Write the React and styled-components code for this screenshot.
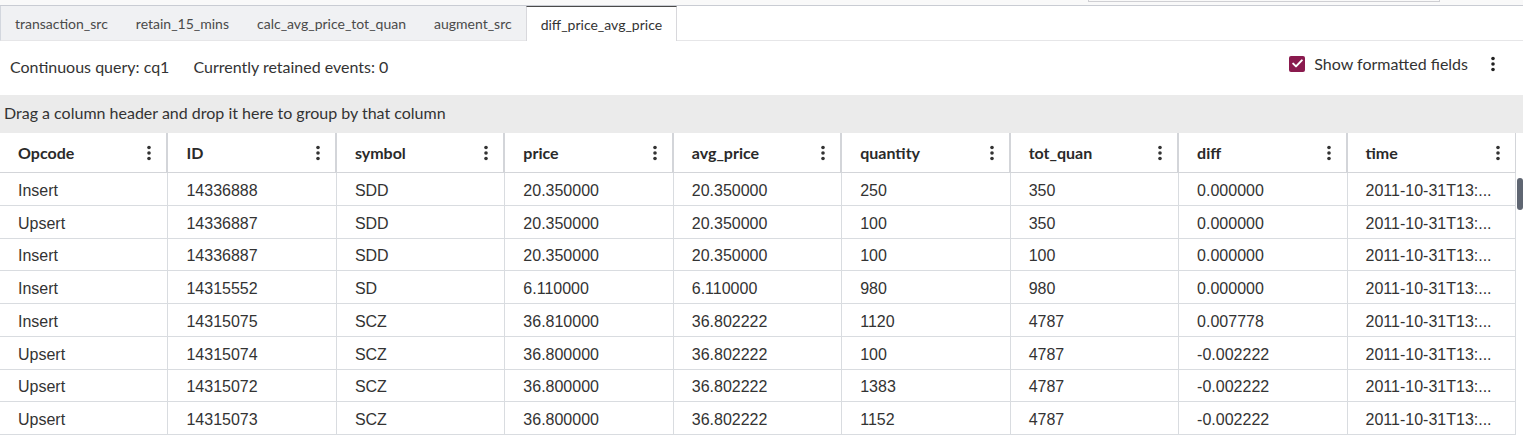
import React from "react";
import styled, { createGlobalStyle } from "styled-components";

const GlobalStyle = createGlobalStyle`
  html, body {
    margin: 0;
    padding: 0;
    background: #fff;
    overflow: hidden;
  }
  body {
    font-family: Lato, "Open Sans", sans-serif;
    color: #333;
  }
`;

const Page = styled.div`
  width: 1523px;
  height: 437px;
  overflow: hidden;
  display: flex;
  flex-direction: column;
`;

const TopStrip = styled.div`
  height: 5px;
  flex: none;
  background: #f9f9f9;
  border-bottom: 1px solid #c9ccd3;
  display: flex;
`;

const SearchEdge = styled.div`
  margin-left: 1088px;
  width: 350px;
  height: 1px;
  border: 1px solid #cfcfd3;
  border-top: none;
`;

const TabBar = styled.div`
  height: 34px;
  flex: none;
  display: flex;
  border-bottom: 1px solid #e6e6e8;
  border-left: 1px solid #d3d7de;
`;

const Tab = styled.div`
  display: flex;
  align-items: center;
  padding: 0 14px;
  font-size: 14px;
  color: ${(p) => (p.$active ? "#333" : "#4a4a4a")};
  background: ${(p) => (p.$active ? "#fff" : "#f0f1f3")};
  border-top: 1px solid ${(p) => (p.$active ? "#4a4a4a" : "#f0f1f3")};
  border-left: ${(p) => (p.$active ? "1px solid #d8d8dc" : "none")};
  border-right: ${(p) => (p.$active ? "1px solid #d8d8dc" : "none")};
  margin-bottom: ${(p) => (p.$active ? "-1px" : "0")};
  white-space: nowrap;
`;

const InfoRow = styled.div`
  height: 54px;
  box-sizing: border-box;
  flex: none;
  display: flex;
  align-items: center;
  padding: 0 27px 3px 10px;
  font-size: 16px;
  color: #333;
`;

const InfoText = styled.span`
  margin-right: 24px;
`;

const Spacer = styled.div`
  flex: 1;
`;

const RightGroup = styled.div`
  display: flex;
  align-items: center;
  margin-bottom: 6px;
`;

const CheckLabel = styled.label`
  display: flex;
  align-items: center;
  gap: 9px;
  font-size: 16px;
  color: #333;
  margin-right: 22px;
`;

const CheckBox = styled.span`
  width: 16px;
  height: 16px;
  border-radius: 2px;
  background: #8a1a4e;
  display: flex;
  align-items: center;
  justify-content: center;
`;

const GroupPanel = styled.div`
  height: 38px;
  box-sizing: border-box;
  flex: none;
  display: flex;
  align-items: center;
  padding: 0 0 3px 4px;
  background: #ebebeb;
  font-size: 16px;
  color: #333;
`;

const TableArea = styled.div`
  flex: 1;
  display: flex;
  min-height: 0;
`;

const Grid = styled.div`
  width: 1516px;
  display: grid;
  grid-template-columns: repeat(9, 1fr);
  grid-auto-rows: 32.75px;
  grid-template-rows: 40px;
  align-content: start;
`;

const HeadCell = styled.div`
  display: flex;
  align-items: center;
  justify-content: space-between;
  padding: 0 14px 0 18px;
  font-size: 16px;
  font-weight: 700;
  color: #2a2a2a;
  border-right: ${(p) => (p.$last ? "1px" : "2px")} solid #d3d5d9;
  border-bottom: 1px solid #d3d5d9;
`;

const Cell = styled.div`
  display: flex;
  align-items: center;
  padding: 4px 0 0 18px;
  font-family: "Liberation Sans", Arial, sans-serif;
  font-size: 16px;
  color: #333;
  border-right: 1px solid #d9dce0;
  border-bottom: 1px solid #d9dce0;
  white-space: nowrap;
  overflow: hidden;
`;

const ScrollTrack = styled.div`
  flex: 1;
  padding-top: 45px;
  display: flex;
  justify-content: center;
`;

const ScrollThumb = styled.div`
  width: 6px;
  height: 32px;
  border-radius: 3px;
  background: #5f6672;
`;

const Kebab = ({ color = "#333" }) => (
  <svg width="6" height="16" viewBox="0 0 6 16">
    <circle cx="3" cy="2.5" r="1.8" fill={color} />
    <circle cx="3" cy="8" r="1.8" fill={color} />
    <circle cx="3" cy="13.5" r="1.8" fill={color} />
  </svg>
);

const tabs = [
  "transaction_src",
  "retain_15_mins",
  "calc_avg_price_tot_quan",
  "augment_src",
  "diff_price_avg_price",
];

const columns = [
  "Opcode",
  "ID",
  "symbol",
  "price",
  "avg_price",
  "quantity",
  "tot_quan",
  "diff",
  "time",
];

const rows = [
  ["Insert", "14336888", "SDD", "20.350000", "20.350000", "250", "350", "0.000000"],
  ["Upsert", "14336887", "SDD", "20.350000", "20.350000", "100", "350", "0.000000"],
  ["Insert", "14336887", "SDD", "20.350000", "20.350000", "100", "100", "0.000000"],
  ["Insert", "14315552", "SD", "6.110000", "6.110000", "980", "980", "0.000000"],
  ["Insert", "14315075", "SCZ", "36.810000", "36.802222", "1120", "4787", "0.007778"],
  ["Upsert", "14315074", "SCZ", "36.800000", "36.802222", "100", "4787", "-0.002222"],
  ["Upsert", "14315072", "SCZ", "36.800000", "36.802222", "1383", "4787", "-0.002222"],
  ["Upsert", "14315073", "SCZ", "36.800000", "36.802222", "1152", "4787", "-0.002222"],
];

export default function App() {
  return (
    <Page>
      <GlobalStyle />
      <TopStrip>
        <SearchEdge />
      </TopStrip>
      <TabBar>
        {tabs.map((t, i) => (
          <Tab key={t} $active={i === tabs.length - 1}>
            {t}
          </Tab>
        ))}
      </TabBar>
      <InfoRow>
        <InfoText>Continuous query: cq1</InfoText>
        <InfoText>Currently retained events: 0</InfoText>
        <Spacer />
        <RightGroup>
          <CheckLabel>
            <CheckBox>
              <svg width="11" height="9" viewBox="0 0 11 9">
                <path
                  d="M1.2 4.6 L4 7.4 L9.8 1.4"
                  fill="none"
                  stroke="#fff"
                  strokeWidth="2"
                  strokeLinecap="round"
                  strokeLinejoin="round"
                />
              </svg>
            </CheckBox>
            Show formatted fields
          </CheckLabel>
          <Kebab color="#222" />
        </RightGroup>
      </InfoRow>
      <GroupPanel>
        Drag a column header and drop it here to group by that column
      </GroupPanel>
      <TableArea>
        <Grid>
          {columns.map((c, i) => (
            <HeadCell key={c} $last={i === columns.length - 1}>
              {c}
              <Kebab />
            </HeadCell>
          ))}
          {rows.map((r, ri) =>
            [...r, "2011-10-31T13:..."].map((v, ci) => (
              <Cell key={ri + "-" + ci}>{v}</Cell>
            ))
          )}
        </Grid>
        <ScrollTrack>
          <ScrollThumb />
        </ScrollTrack>
      </TableArea>
    </Page>
  );
}
